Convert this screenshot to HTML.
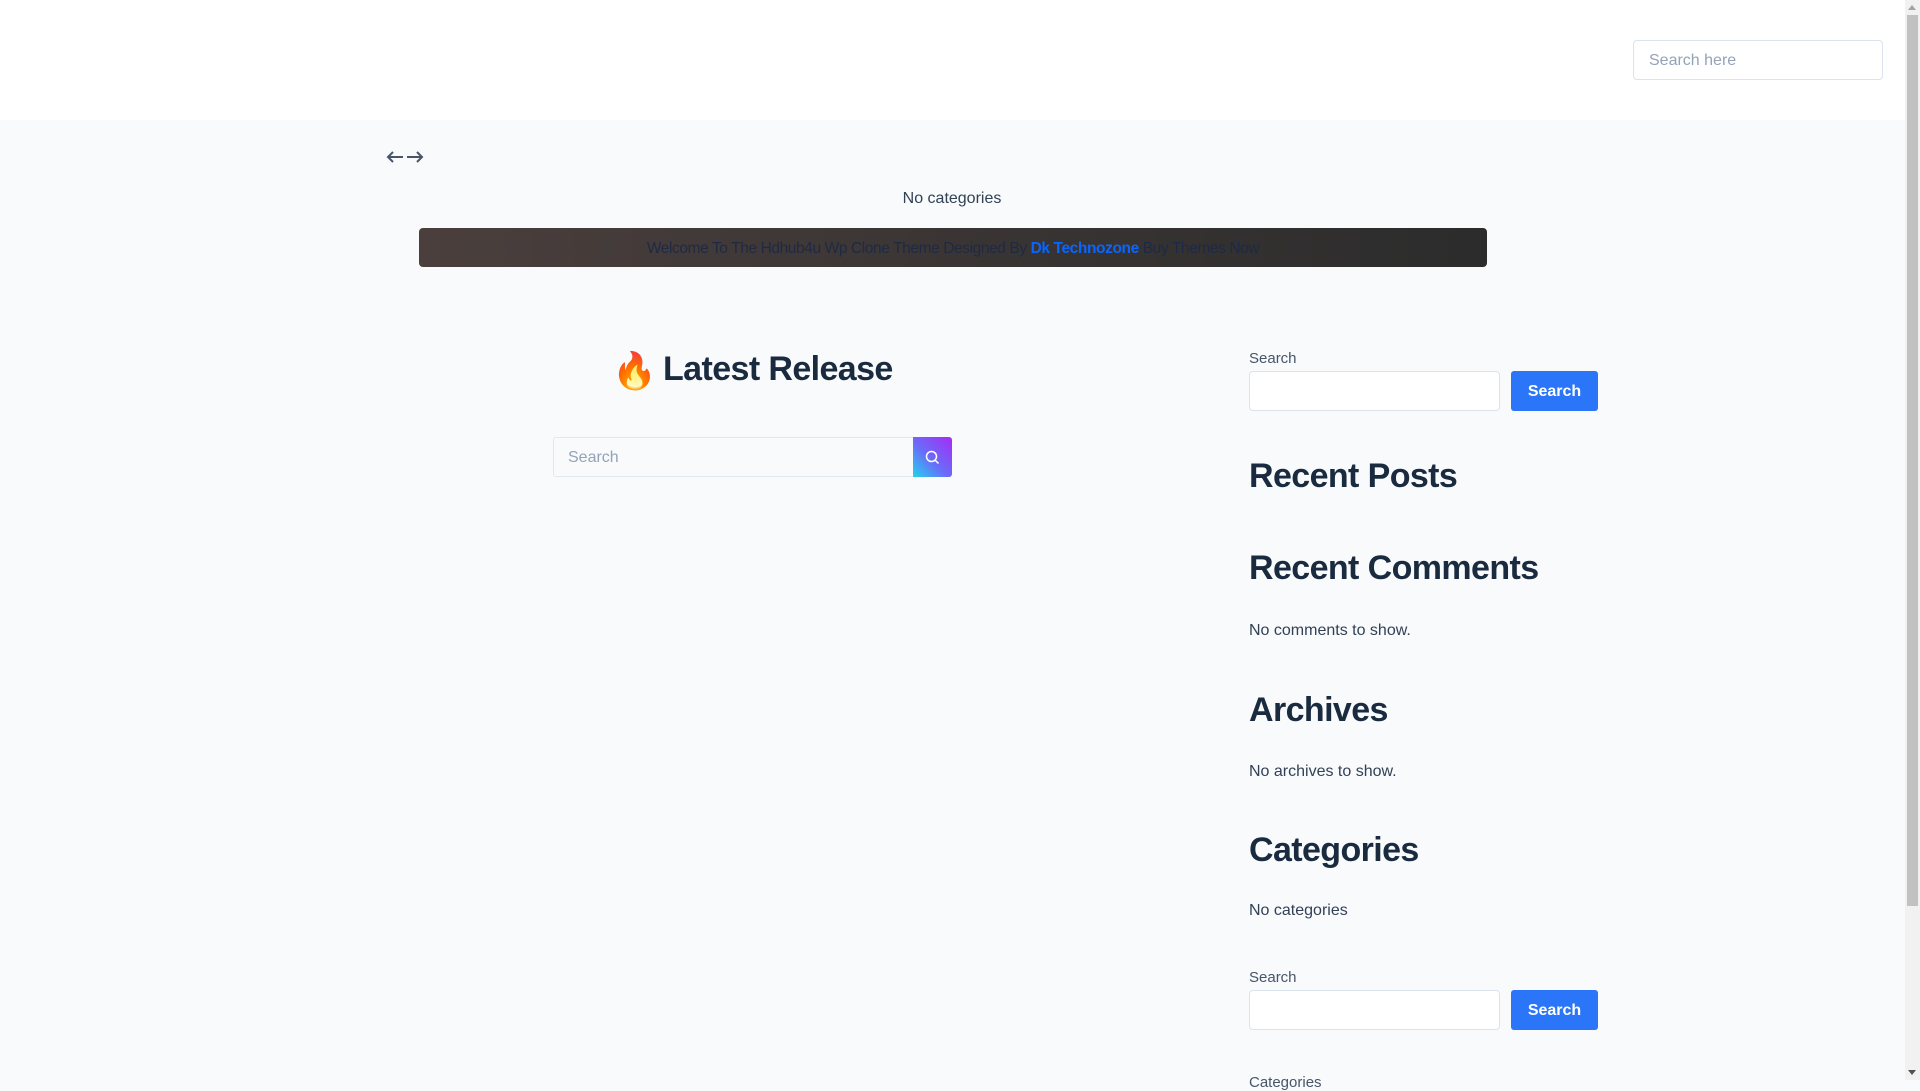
<!DOCTYPE html>
<html><head><meta charset="utf-8">
<style>
*{margin:0;padding:0;box-sizing:border-box}
html,body{width:1920px;height:1080px;overflow:hidden;background:#f8fafc;font-family:"Liberation Sans",Arial,sans-serif;color:#1e293b}
.a{position:absolute;white-space:nowrap}
.hdr{position:absolute;left:0;top:0;width:1905px;height:120px;background:#fff}
.inp{position:absolute;background:#fff;border:1px solid #dbe3ec;border-radius:4px}
.btn{position:absolute;background:#2a75f8;color:#fff;font-weight:bold;font-size:16px;border-radius:3px;display:flex;align-items:center;justify-content:center}
h2{position:absolute;font-size:34px;font-weight:bold;color:#1a2b3f;left:1249px;white-space:nowrap;letter-spacing:-0.6px}
.p{font-size:16px;color:#334155}
.lbl{font-size:15px;color:#475569}
</style></head><body>
<div class="hdr"></div>
<div class="inp" style="left:1633px;top:40px;width:250px;height:40px;"></div>
<div class="a" style="left:1649px;top:52px;font-size:16px;color:#94a3b8">Search here</div>
<div class="a" style="left:1905px;top:0;width:15px;height:1080px;background:#f1f1f1"></div>
<div class="a" style="left:1907px;top:15px;width:11px;height:891px;background:#c1c1c1"></div>
<div class="a" style="left:1908px;top:5px;width:0;height:0;border-left:4px solid transparent;border-right:4px solid transparent;border-bottom:5px solid #a3a3a3"></div>
<div class="a" style="left:1908px;top:1070px;width:0;height:0;border-left:4px solid transparent;border-right:4px solid transparent;border-top:5px solid #505050"></div>

<svg class="a" style="left:386px;top:149px" width="40" height="16" viewBox="0 0 40 16" fill="none" stroke="#475569" stroke-width="2"><path d="M2 8H17M7 3L2 8L7 13"/><path d="M21 8H36M31 3L36 8L31 13"/></svg>

<div class="a p" style="left:852px;top:190px;width:200px;text-align:center;color:#334155">No categories</div>

<div class="a" style="left:419px;top:228px;width:1068px;height:39px;border-radius:4px;background:linear-gradient(90deg,#4a3f3d,#3a3534 50%,#2c2c2c)"></div>
<div class="a" style="left:419px;top:240px;width:1068px;text-align:center;font-size:15.5px;letter-spacing:-0.4px;color:#1e2a44">Welcome To The Hdhub4u Wp Clone Theme Designed By <b style="color:#0866ff">Dk Technozone</b> Buy Themes Now</div>

<div class="a" style="left:612px;top:350px;font-size:36px;line-height:42px;font-family:'Noto Color Emoji',sans-serif">🔥</div>
<div class="a" style="left:663px;top:350px;font-size:34px;font-weight:bold;color:#1a2b3f;letter-spacing:-0.6px">Latest Release</div>

<div class="inp" style="left:553px;top:437px;width:399px;height:40px;background:#f8fafc;border-color:#e2e8f0;border-radius:3px"></div>
<div class="a" style="left:568px;top:449px;font-size:16px;color:#94a3b8">Search</div>
<div class="a" style="left:913px;top:437px;width:39px;height:40px;background:linear-gradient(225deg,#a52cf6,#6a6cf8 55%,#22d3ee);border-radius:0 3px 3px 0"></div>
<svg class="a" style="left:924px;top:449px" width="17" height="17" viewBox="0 0 17 17" fill="none" stroke="#fff" stroke-width="1.5"><circle cx="7.5" cy="7.5" r="5"/><path d="M11 11L14.5 14.5"/></svg>

<div class="a lbl" style="left:1249px;top:350px">Search</div>
<div class="inp" style="left:1249px;top:371px;width:251px;height:40px"></div>
<div class="btn" style="left:1511px;top:371px;width:87px;height:40px;padding-top:2px">Search</div>

<h2 style="top:457px">Recent Posts</h2>
<h2 style="top:549px">Recent Comments</h2>
<div class="a p" style="left:1249px;top:622px">No comments to show.</div>
<h2 style="top:691px">Archives</h2>
<div class="a p" style="left:1249px;top:763px">No archives to show.</div>
<h2 style="top:831px">Categories</h2>
<div class="a p" style="left:1249px;top:902px">No categories</div>

<div class="a lbl" style="left:1249px;top:969px">Search</div>
<div class="inp" style="left:1249px;top:990px;width:251px;height:40px"></div>
<div class="btn" style="left:1511px;top:990px;width:87px;height:40px;padding-top:2px">Search</div>
<div class="a lbl" style="left:1249px;top:1074px">Categories</div>
</body></html>
